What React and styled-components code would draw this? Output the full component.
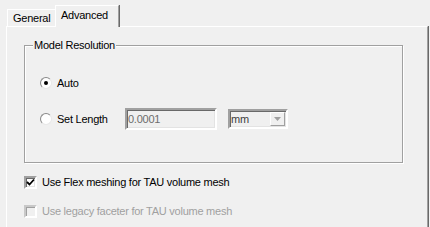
import React from "react";
import styled, { createGlobalStyle, css } from "styled-components";

const Global = createGlobalStyle`
  html, body { margin: 0; padding: 0; height: 100%; overflow: hidden; background: #f0f0f0; }
  body { font-family: "Liberation Sans", Arial, sans-serif; font-size: 11px; letter-spacing: -0.25px; color: #000; }
  #root { height: 100%; }
`;

const Page = styled.div`
  padding: 5px 1px 0 6px;
  box-sizing: border-box;
  height: 100%;
  display: flex;
  flex-direction: column;
`;

const TabStrip = styled.div`
  display: flex;
  align-items: flex-end;
  height: 21px;
  padding-left: 1px;
`;

const Tab = styled.div`
  box-sizing: border-box;
  display: flex;
  align-items: center;
  background: #f0f0f0;
  border-top: 1px solid #fff;
  border-left: 1px solid #fff;
  white-space: nowrap;
  ${(p) =>
    p.$active
      ? css`
          position: relative;
          z-index: 1;
          height: 22px;
          margin-bottom: -1px;
          margin-left: -2px;
          width: 64px;
          padding: 0 0 3px 5px;
          border-right: 1px solid #a0a0a0;
          box-shadow: 1px 0 0 #696969;
        `
      : css`
          height: 17px;
          width: 50px;
          padding: 0 0 0 5px;
        `}
`;

const Panel = styled.div`
  box-sizing: border-box;
  height: 210px;
  border-top: 1px solid #fff;
  border-left: 1px solid #fff;
  border-right: 1px solid #a0a0a0;
  box-shadow: 1px 0 0 #696969;
  margin-right: 1px;
  padding: 18px 24px 0 17px;
  display: flex;
  flex-direction: column;
`;

const Group = styled.div`
  position: relative;
  box-sizing: border-box;
  height: 118px;
  border: 1px solid #a0a0a0;
  box-shadow: 1px 1px 0 #fff, inset 1px 1px 0 #fff;
  padding: 29px 0 0 15px;
  display: flex;
  flex-direction: column;
  gap: 17px;
`;

const Legend = styled.span`
  position: absolute;
  top: -8px;
  left: 8px;
  padding: 0 1px;
  background: #f0f0f0;
  line-height: 14px;
`;

const Row = styled.div`
  display: flex;
  align-items: center;
  height: ${(p) => p.$h || 16}px;
`;

const Radio = styled.span`
  box-sizing: border-box;
  width: 12px;
  height: 12px;
  border-radius: 50%;
  border: 1px solid;
  border-color: #8a8a8a #e8e8e8 #e8e8e8 #8a8a8a;
  background: radial-gradient(circle at 60% 60%, #ffffff 55%, #f2f2f2 100%);
  display: flex;
  align-items: center;
  justify-content: center;
  flex: none;
  &::after {
    content: "";
    width: 4px;
    height: 4px;
    border-radius: 50%;
    background: ${(p) => (p.$checked ? "#000" : "transparent")};
  }
`;

const Label = styled.span`
  margin-left: 5px;
  width: ${(p) => (p.$w ? p.$w + "px" : "auto")};
  color: ${(p) => (p.$disabled ? "#a0a0a0" : "#000")};
  white-space: nowrap;
`;

const sunken = css`
  box-sizing: border-box;
  border: 2px solid;
  border-color: #a0a0a0 #fff #fff #a0a0a0;
  box-shadow: inset 1px 1px 0 #696969, inset -1px -1px 0 #e3e3e3;
`;

const TextInput = styled.div`
  ${sunken};
  width: 92px;
  height: 22px;
  background: #f0f0f0;
  color: #6d6d6d;
  padding: 0 0 0 1px;
  display: flex;
  align-items: center;
`;

const Combo = styled.div`
  ${sunken};
  margin-left: 11px;
  width: 60px;
  height: 20px;
  background: #f0f0f0;
  display: flex;
  align-items: center;
  justify-content: space-between;
  padding: 0 1px 0 1px;
  color: #404040;
`;

const ComboButton = styled.span`
  box-sizing: border-box;
  width: 15px;
  height: 14px;
  border: 1px solid;
  border-color: #fff #a0a0a0 #a0a0a0 #fff;
  display: flex;
  align-items: center;
  justify-content: center;
`;

const CheckRow = styled.div`
  display: flex;
  align-items: center;
  height: 16px;
  margin-top: ${(p) => p.$mt}px;
`;

const Check = styled.span`
  ${sunken};
  width: 13px;
  height: 13px;
  flex: none;
  background: ${(p) => (p.$disabled ? "#f0f0f0" : "#fff")};
  display: flex;
  align-items: center;
  justify-content: center;
  ${(p) =>
    p.$disabled &&
    css`
      border-color: #c8c8c8 #fff #fff #c8c8c8;
      box-shadow: inset 1px 1px 0 #a0a0a0;
    `}
`;

export default function App() {
  return (
    <>
      <Global />
      <Page>
        <TabStrip>
          <Tab>General</Tab>
          <Tab $active>Advanced</Tab>
        </TabStrip>
        <Panel>
          <Group>
            <Legend>Model Resolution</Legend>
            <Row>
              <Radio $checked />
              <Label>Auto</Label>
            </Row>
            <Row $h={22}>
              <Radio />
              <Label $w={68}>Set Length</Label>
              <TextInput>0.0001</TextInput>
              <Combo>
                <span>mm</span>
                <ComboButton>
                  <svg width="7" height="4" viewBox="0 0 7 4">
                    <path d="M0 0 H7 L3.5 4 Z" fill="#a0a0a0" />
                  </svg>
                </ComboButton>
              </Combo>
            </Row>
          </Group>
          <CheckRow $mt={11}>
            <Check>
              <svg width="9" height="9" viewBox="0 0 9 9">
                <path d="M1 4 L3.5 6.5 L8 1.5" fill="none" stroke="#000" strokeWidth="1.8" />
              </svg>
            </Check>
            <Label>Use Flex meshing for TAU volume mesh</Label>
          </CheckRow>
          <CheckRow $mt={13}>
            <Check $disabled />
            <Label $disabled>Use legacy faceter for TAU volume mesh</Label>
          </CheckRow>
        </Panel>
      </Page>
    </>
  );
}
